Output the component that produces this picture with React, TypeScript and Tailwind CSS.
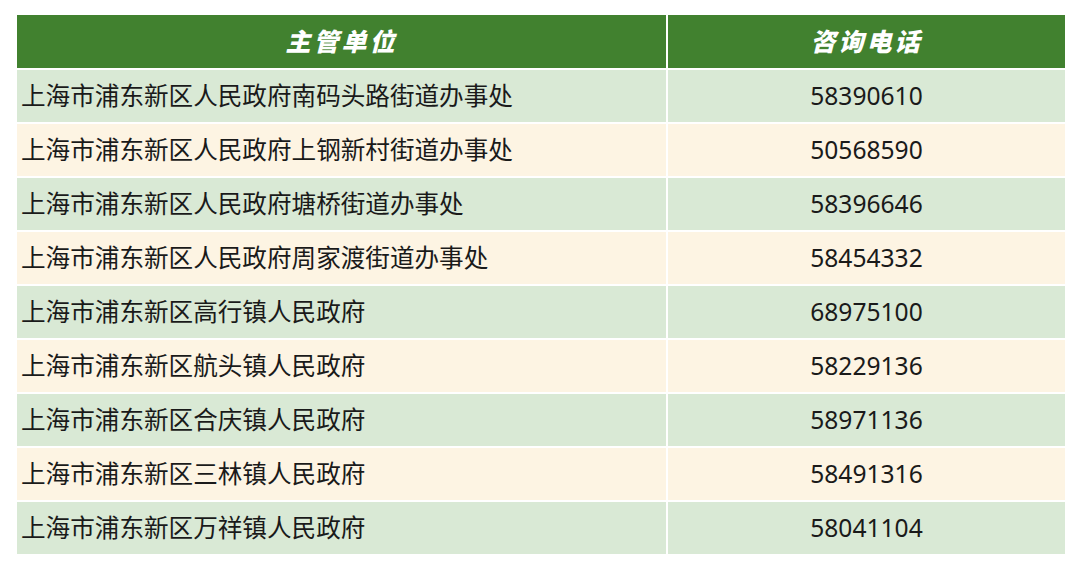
const rows = [
  { unit: "上海市浦东新区人民政府南码头路街道办事处", phone: "58390610" },
  { unit: "上海市浦东新区人民政府上钢新村街道办事处", phone: "50568590" },
  { unit: "上海市浦东新区人民政府塘桥街道办事处", phone: "58396646" },
  { unit: "上海市浦东新区人民政府周家渡街道办事处", phone: "58454332" },
  { unit: "上海市浦东新区高行镇人民政府", phone: "68975100" },
  { unit: "上海市浦东新区航头镇人民政府", phone: "58229136" },
  { unit: "上海市浦东新区合庆镇人民政府", phone: "58971136" },
  { unit: "上海市浦东新区三林镇人民政府", phone: "58491316" },
  { unit: "上海市浦东新区万祥镇人民政府", phone: "58041104" },
];

export default function App() {
  return (
    <div
      className="w-[1080px] h-[573px] bg-white pt-[15px] pl-[17px]"
      style={{ fontFamily: '"Noto Sans", "Noto Sans CJK SC", sans-serif' }}
    >
      <div className="w-[1048px] grid grid-cols-[649px_397px] gap-[2px]">
        <div className="h-[53px] bg-[#41812f] flex items-center justify-center text-white text-[25px] font-black italic tracking-[3px]">
          主管单位
        </div>
        <div className="h-[53px] bg-[#41812f] flex items-center justify-center text-white text-[25px] font-black italic tracking-[3px]">
          咨询电话
        </div>
        {rows.map((r, i) => {
          const bg = i % 2 === 0 ? "bg-[#d9e9d5]" : "bg-[#fdf4e3]";
          return [
            <div
              key={`u${i}`}
              className={`h-[52px] ${bg} flex items-center pl-[4px] text-[24.6px] text-[#1a1a1a] whitespace-nowrap`}
            >
              {r.unit}
            </div>,
            <div
              key={`p${i}`}
              className={`h-[52px] ${bg} flex items-center justify-center text-[24.6px] text-[#1a1a1a]`}
            >
              {r.phone}
            </div>,
          ];
        })}
      </div>
    </div>
  );
}
